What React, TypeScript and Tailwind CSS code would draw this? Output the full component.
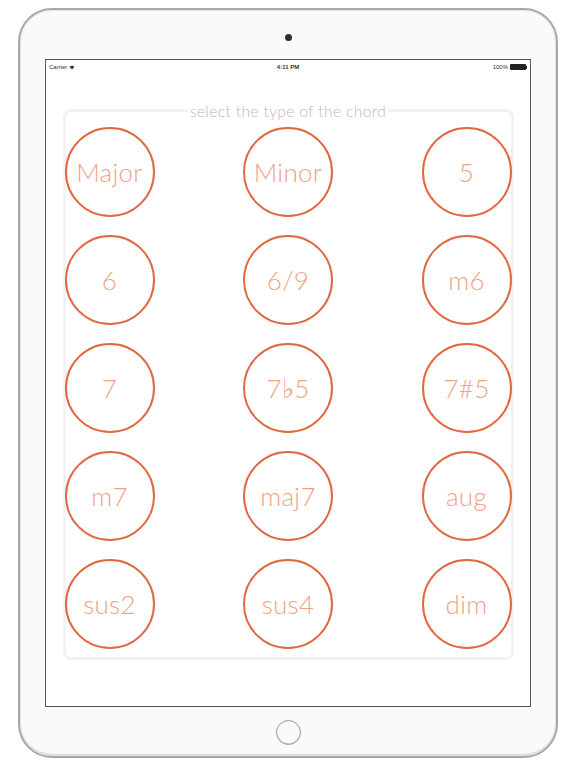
import React from "react";

const chords = ["Major", "Minor", "5", "6", "6/9", "m6", "7", "7\u266D5", "7#5", "m7", "maj7", "aug", "sus2", "sus4", "dim"];

export default function App() {
  return (
    <div className="w-[576px] h-[768px] bg-white overflow-hidden pt-[8px] pl-[18px]" style={{ fontFamily: "Lato, 'Open Sans', sans-serif" }}>
      <div className="w-[540px] h-[750px] rounded-[34px] border-2 border-[#a8a8a8] bg-[#fafafa] flex flex-col items-center shadow-[inset_0_0_0_1px_#e2e2e2,inset_0_-2px_1px_#d8d8d8]">
        <div className="mt-[24px] w-[7px] h-[7px] rounded-full bg-[#2e2e2e]" />
        <div className="mt-[18px] w-[486px] h-[648px] border-[1.5px] border-[#555] bg-white flex flex-col">
          <div className="h-[14px] px-[3px] flex items-center justify-between text-[6px] text-[#333]" style={{ fontFamily: "'Liberation Sans', Arial, sans-serif" }}>
            <div className="flex items-center gap-[2px] w-[60px]">
              <span>Carrier</span>
              <svg width="6" height="5" viewBox="0 0 12 10">
                <path d="M6 9 L1 3.5 A7.5 7.5 0 0 1 11 3.5 Z" fill="#333" />
              </svg>
            </div>
            <span className="font-bold">4:11 PM</span>
            <div className="flex items-center justify-end gap-[2px] w-[60px]">
              <span>100%</span>
              <div className="flex items-center">
                <div className="w-[16px] h-[6px] rounded-[1px] bg-[#222]" />
                <div className="w-[1px] h-[3px] bg-[#222]" />
              </div>
            </div>
          </div>
          <div className="relative mt-[35px] mx-auto w-[451px] h-[551px] border-[3px] border-[#f2f2f2] rounded-[8px] pt-[15px]">
            <div className="absolute left-0 right-0 -top-[11px] flex justify-center">
              <span className="bg-white px-[2px] text-[15.5px] leading-[20px] font-light text-[#b8b8b8] tracking-[0.4px]">select the type of the chord</span>
            </div>
            <div className="grid grid-cols-3 gap-y-[18px] justify-items-center -mx-[1px]" style={{ gridTemplateColumns: "90px 1fr 90px" }}>
              {chords.map((c, i) => (
                <div key={i} className="w-[90px] h-[90px] rounded-full border-2 border-[#e2683f] flex items-center justify-center">
                  <span className="text-[26px] font-light text-[#efa286] leading-none tracking-[0.3px]">{c}</span>
                </div>
              ))}
            </div>
          </div>
        </div>
        <div className="mt-[13px] w-[25px] h-[25px] rounded-full border border-[#9c9c9c] shadow-[inset_0_-1px_1px_#cfcfcf]" />
      </div>
    </div>
  );
}
